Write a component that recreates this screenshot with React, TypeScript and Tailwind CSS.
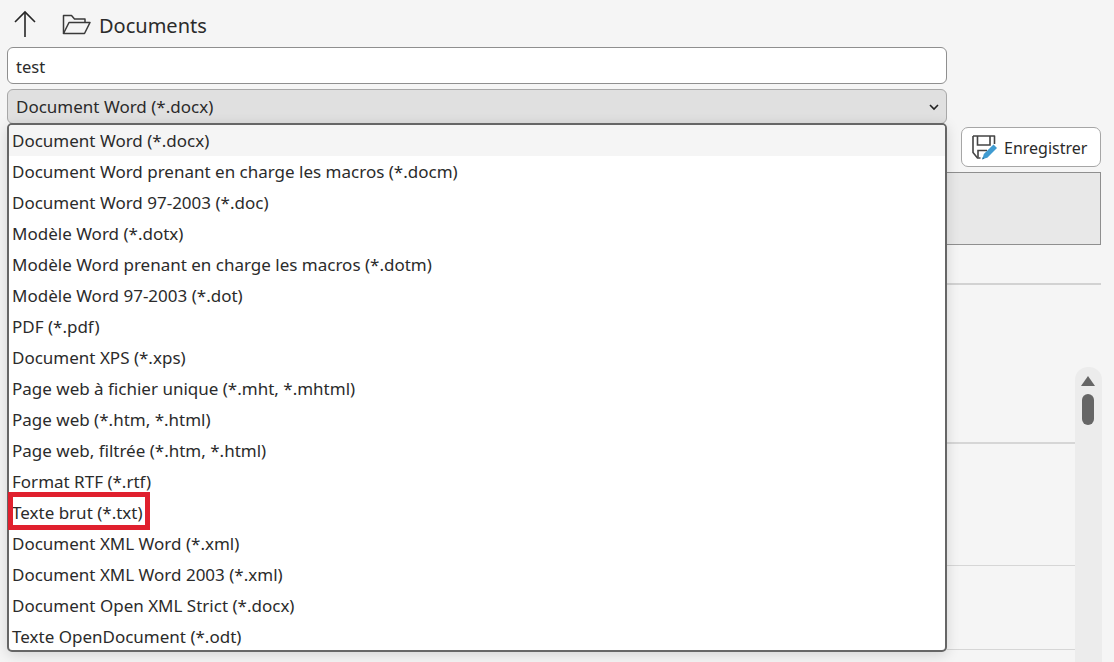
const formats = [
  'Document Word (*.docx)',
  'Document Word prenant en charge les macros (*.docm)',
  'Document Word 97-2003 (*.doc)',
  'Modèle Word (*.dotx)',
  'Modèle Word prenant en charge les macros (*.dotm)',
  'Modèle Word 97-2003 (*.dot)',
  'PDF (*.pdf)',
  'Document XPS (*.xps)',
  'Page web à fichier unique (*.mht, *.mhtml)',
  'Page web (*.htm, *.html)',
  'Page web, filtrée (*.htm, *.html)',
  'Format RTF (*.rtf)',
  'Texte brut (*.txt)',
  'Document XML Word (*.xml)',
  'Document XML Word 2003 (*.xml)',
  'Document Open XML Strict (*.docx)',
  'Texte OpenDocument (*.odt)',
]

function UpArrow() {
  return (
    <svg width="24" height="28" viewBox="0 0 24 28" fill="none" stroke="#262626" strokeWidth="1.6">
      <path d="M12 27V2" />
      <path d="M2 12L12 2l10 10" />
    </svg>
  )
}

function FolderIcon() {
  return (
    <svg width="29" height="21" viewBox="0 0 29 21" fill="none" stroke="#3a3a3a" strokeWidth="1.5" strokeLinejoin="round">
      <path d="M1.5 19.5V1.5h8l3 3.5h10.5v3.5" />
      <path d="M1.5 19.5L7 8.5h21l-5.5 11z" />
    </svg>
  )
}

function SaveIcon() {
  return (
    <svg width="26" height="25" viewBox="0 0 26 25" fill="none">
      <path d="M1 1h21.500v8M1 1v16.500l4.500 5.500h3" stroke="#444" strokeWidth="1.6" strokeLinejoin="round" />
      <path d="M5.500 1v9h12.500V1M6 22.500v-7h9" stroke="#444" strokeWidth="1.6" />
      <path d="M10.500 24l1.300-5L21.500 9.500l3.500 3.500-9.700 9.700z" fill="#3f9bd1" />
      <path d="M10 24.500l2.500-.8-1.700-1.700z" fill="#1f6f9f" />
    </svg>
  )
}

export default function App() {
  return (
    <div className="relative flex h-[662px] w-[1114px] overflow-hidden bg-[#f5f5f5] font-['Noto_Sans',sans-serif] text-[#2b2b2b]">
      {/* Left column */}
      <div className="w-[947px] shrink-0 pl-[7px]">
        <div className="flex h-[47px] items-center pt-[5px]">
          <div className="ml-[6px] w-[49px] -translate-y-[2px]">
            <UpArrow />
          </div>
          <div className="-translate-y-[2px]">
            <FolderIcon />
          </div>
          <span className="ml-[8px] text-[20px] leading-none">Documents</span>
        </div>
        <div className="flex h-[37px] items-center rounded-[6px] border border-[#8f8f8f] bg-white pl-[8px] pt-[3px] text-[16.500px]">
          test
        </div>
        <div className="mt-[5px] flex h-[35px] items-center justify-between rounded-[6px] border border-[#a8a8a8] bg-[#e0e0e0] pl-[8px] pr-[6px] text-[17px]">
          <span>Document Word (*.docx)</span>
          <svg width="12" height="8" viewBox="0 0 12 8" fill="none" stroke="#222" strokeWidth="1.6">
            <path d="M2 2l4 4 4-4" />
          </svg>
        </div>
      </div>

      {/* Right column */}
      <div className="flex flex-1 flex-col pt-[127px]">
        <div className="ml-[14px] flex h-[40px] w-[140px] items-center rounded-[7px] border border-[#a6a6a6] bg-white pl-[10px] text-[16px]">
          <SaveIcon />
          <span className="ml-[6px] pt-[1px]">Enregistrer</span>
        </div>
        <div className="mt-[5px] h-[73px] w-[154px] border border-l-0 border-[#8f8f8f] bg-[#e8e8e8]" />
        <div className="mt-[38px] h-[2px] w-[154px] bg-[#d2d2d2]" />
        <div className="flex flex-1">
          <div className="w-[128px]">
            <div className="mt-[157px] h-[2px] bg-[#d6d6d6]" />
            <div className="mt-[121px] h-[1px] bg-[#d6d6d6]" />
            <div className="mt-[83px] h-[1px] bg-[#d6d6d6]" />
          </div>
          <div className="mt-[82px] flex w-[27px] flex-col items-center rounded-t-[13px] bg-[#ececec] pr-[1px] pt-[9px]">
            <div className="h-0 w-0 border-x-[7px] border-b-[10px] border-x-transparent border-b-[#666]" />
            <div className="mt-[8px] h-[31px] w-[12px] rounded-full bg-[#666]" />
          </div>
        </div>
      </div>

      {/* Dropdown list */}
      <div className="absolute left-[7px] top-[123px] h-[529px] w-[940px] overflow-hidden rounded-[5px] border-2 border-[#666] bg-white shadow-[0_3px_14px_rgba(0,0,0,0.14)]">
        {formats.map((label, i) => (
          <div
            key={label}
            className={`flex h-[31px] items-center pl-[3px] text-[17px] ${i === 0 ? 'bg-[#f5f5f5]' : ''}`}
          >
            {label}
          </div>
        ))}
      </div>

      {/* Red highlight */}
      <div className="absolute left-[8px] top-[492px] h-[38px] w-[142px] border-[5px] border-[#e0202e]" />
    </div>
  )
}
